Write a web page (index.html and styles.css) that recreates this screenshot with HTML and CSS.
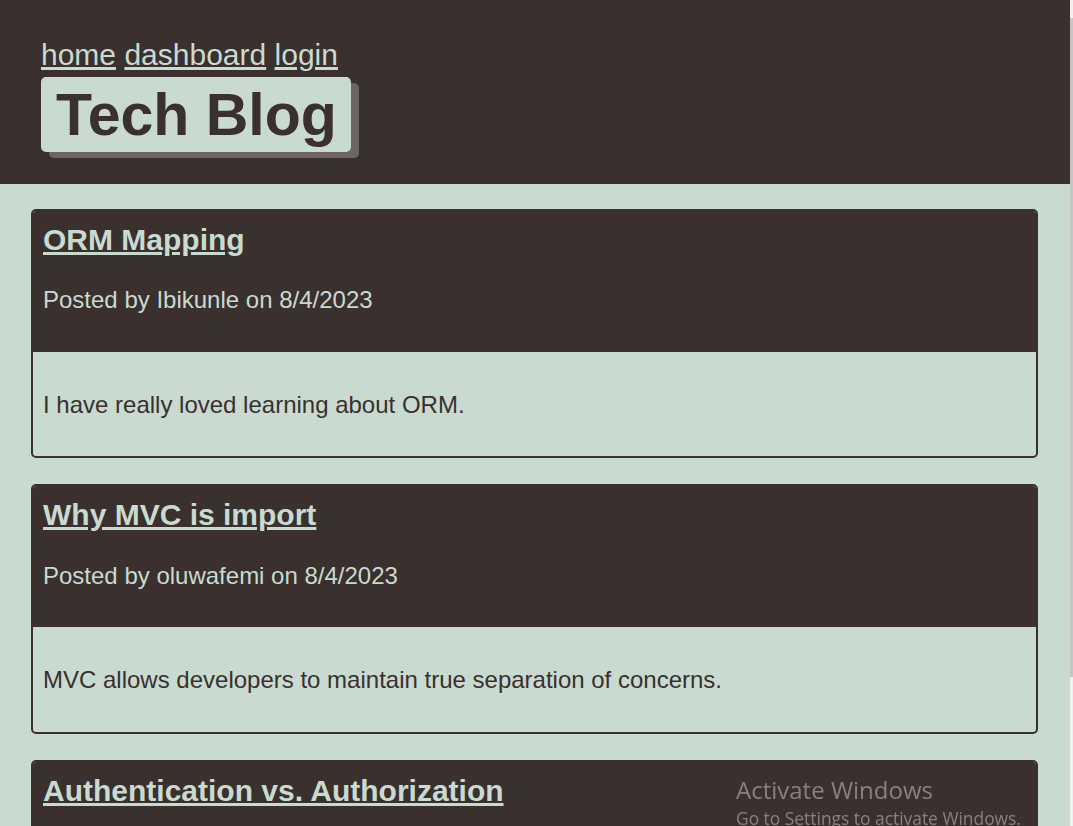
FILE: index.html
```html
<!DOCTYPE html>
<html lang="en">
<head>
<meta charset="utf-8">
<title>Tech Blog</title>
<link rel="stylesheet" href="styles.css">
</head>
<body>
<header class="site-header">
  <nav class="nav">
    <a href="#">home</a>
    <a href="#">dashboard</a>
    <a href="#">login</a>
  </nav>
  <h1 class="brand">Tech Blog</h1>
</header>
<main class="posts">
  <article class="post">
    <div class="post-head">
      <h2 class="post-title"><a href="#">ORM Mapping</a></h2>
      <p class="post-meta">Posted by Ibikunle on 8/4/2023</p>
    </div>
    <div class="post-body">
      <p>I have really loved learning about ORM.</p>
    </div>
  </article>
  <article class="post">
    <div class="post-head">
      <h2 class="post-title"><a href="#">Why MVC is import</a></h2>
      <p class="post-meta">Posted by oluwafemi on 8/4/2023</p>
    </div>
    <div class="post-body">
      <p>MVC allows developers to maintain true separation of concerns.</p>
    </div>
  </article>
  <article class="post">
    <div class="post-head">
      <h2 class="post-title"><a href="#">Authentication vs. Authorization</a></h2>
      <p class="post-meta">Posted by Ibikunle on 8/4/2023</p>
    </div>
    <div class="post-body">
      <p>There is a difference between authentication and authorization.</p>
    </div>
  </article>
</main>
<div class="scrollbar"><div class="scrollbar-thumb"></div></div>
<div class="watermark">
  <div class="wm-title">Activate Windows</div>
  <div class="wm-sub">Go to Settings to activate Windows.</div>
</div>
</body>
</html>
```

FILE: styles.css
```css
body {
  margin: 0;
  background: #c9dad0;
  font-family: "Liberation Sans", Arial, sans-serif;
  color: #3a302e;
}
.site-header {
  background: #3a302e;
  padding: 38px 44px 32px 41px;
}
.nav {
  font-size: 30px;
  line-height: 34.5px;
}
.nav a {
  color: #c9dad0;
}
.brand {
  display: inline-block;
  margin: 4px 0 0;
  padding: 5px 14px 3px 15px;
  font-size: 59px;
  font-weight: bold;
  line-height: 67px;
  background: #c9dad0;
  color: #3a302e;
  border-radius: 5px;
  box-shadow: 8px 6px 0 #6e6462;
}
.posts {
  padding: 25px 35px 1px 31px;
}
.post {
  border: 2px solid #3a302e;
  border-radius: 5px;
  margin-bottom: 26px;
  overflow: hidden;
}
.post-head {
  background: #3a302e;
  padding: 12px 10px 15px;
  color: #c9dad0;
}
.post-title {
  margin: 0;
  font-size: 30px;
  line-height: 34.5px;
  font-weight: bold;
}
.post-title a {
  color: #c9dad0;
}
.post-meta {
  margin: 29px 0 23px;
  font-size: 24px;
  line-height: 27.6px;
}
.post-body {
  padding: 39px 10px 38px;
  font-size: 24px;
  line-height: 27.6px;
}
.post-body p {
  margin: 0;
}
.scrollbar {
  position: fixed;
  top: 0;
  right: 0;
  bottom: 0;
  width: 3px;
  background: #f0f0f0;
  padding-top: 18px;
}
.scrollbar-thumb {
  height: 659px;
  background: #c6c6c6;
}
.watermark {
  position: fixed;
  left: 736px;
  top: 775px;
  font-family: "Open Sans", "Noto Sans", sans-serif;
  color: rgba(210, 210, 210, 0.5);
  pointer-events: none;
}
.wm-title {
  font-size: 24px;
  line-height: 30px;
}
.wm-sub {
  font-size: 17.4px;
  line-height: 26px;
}
```
